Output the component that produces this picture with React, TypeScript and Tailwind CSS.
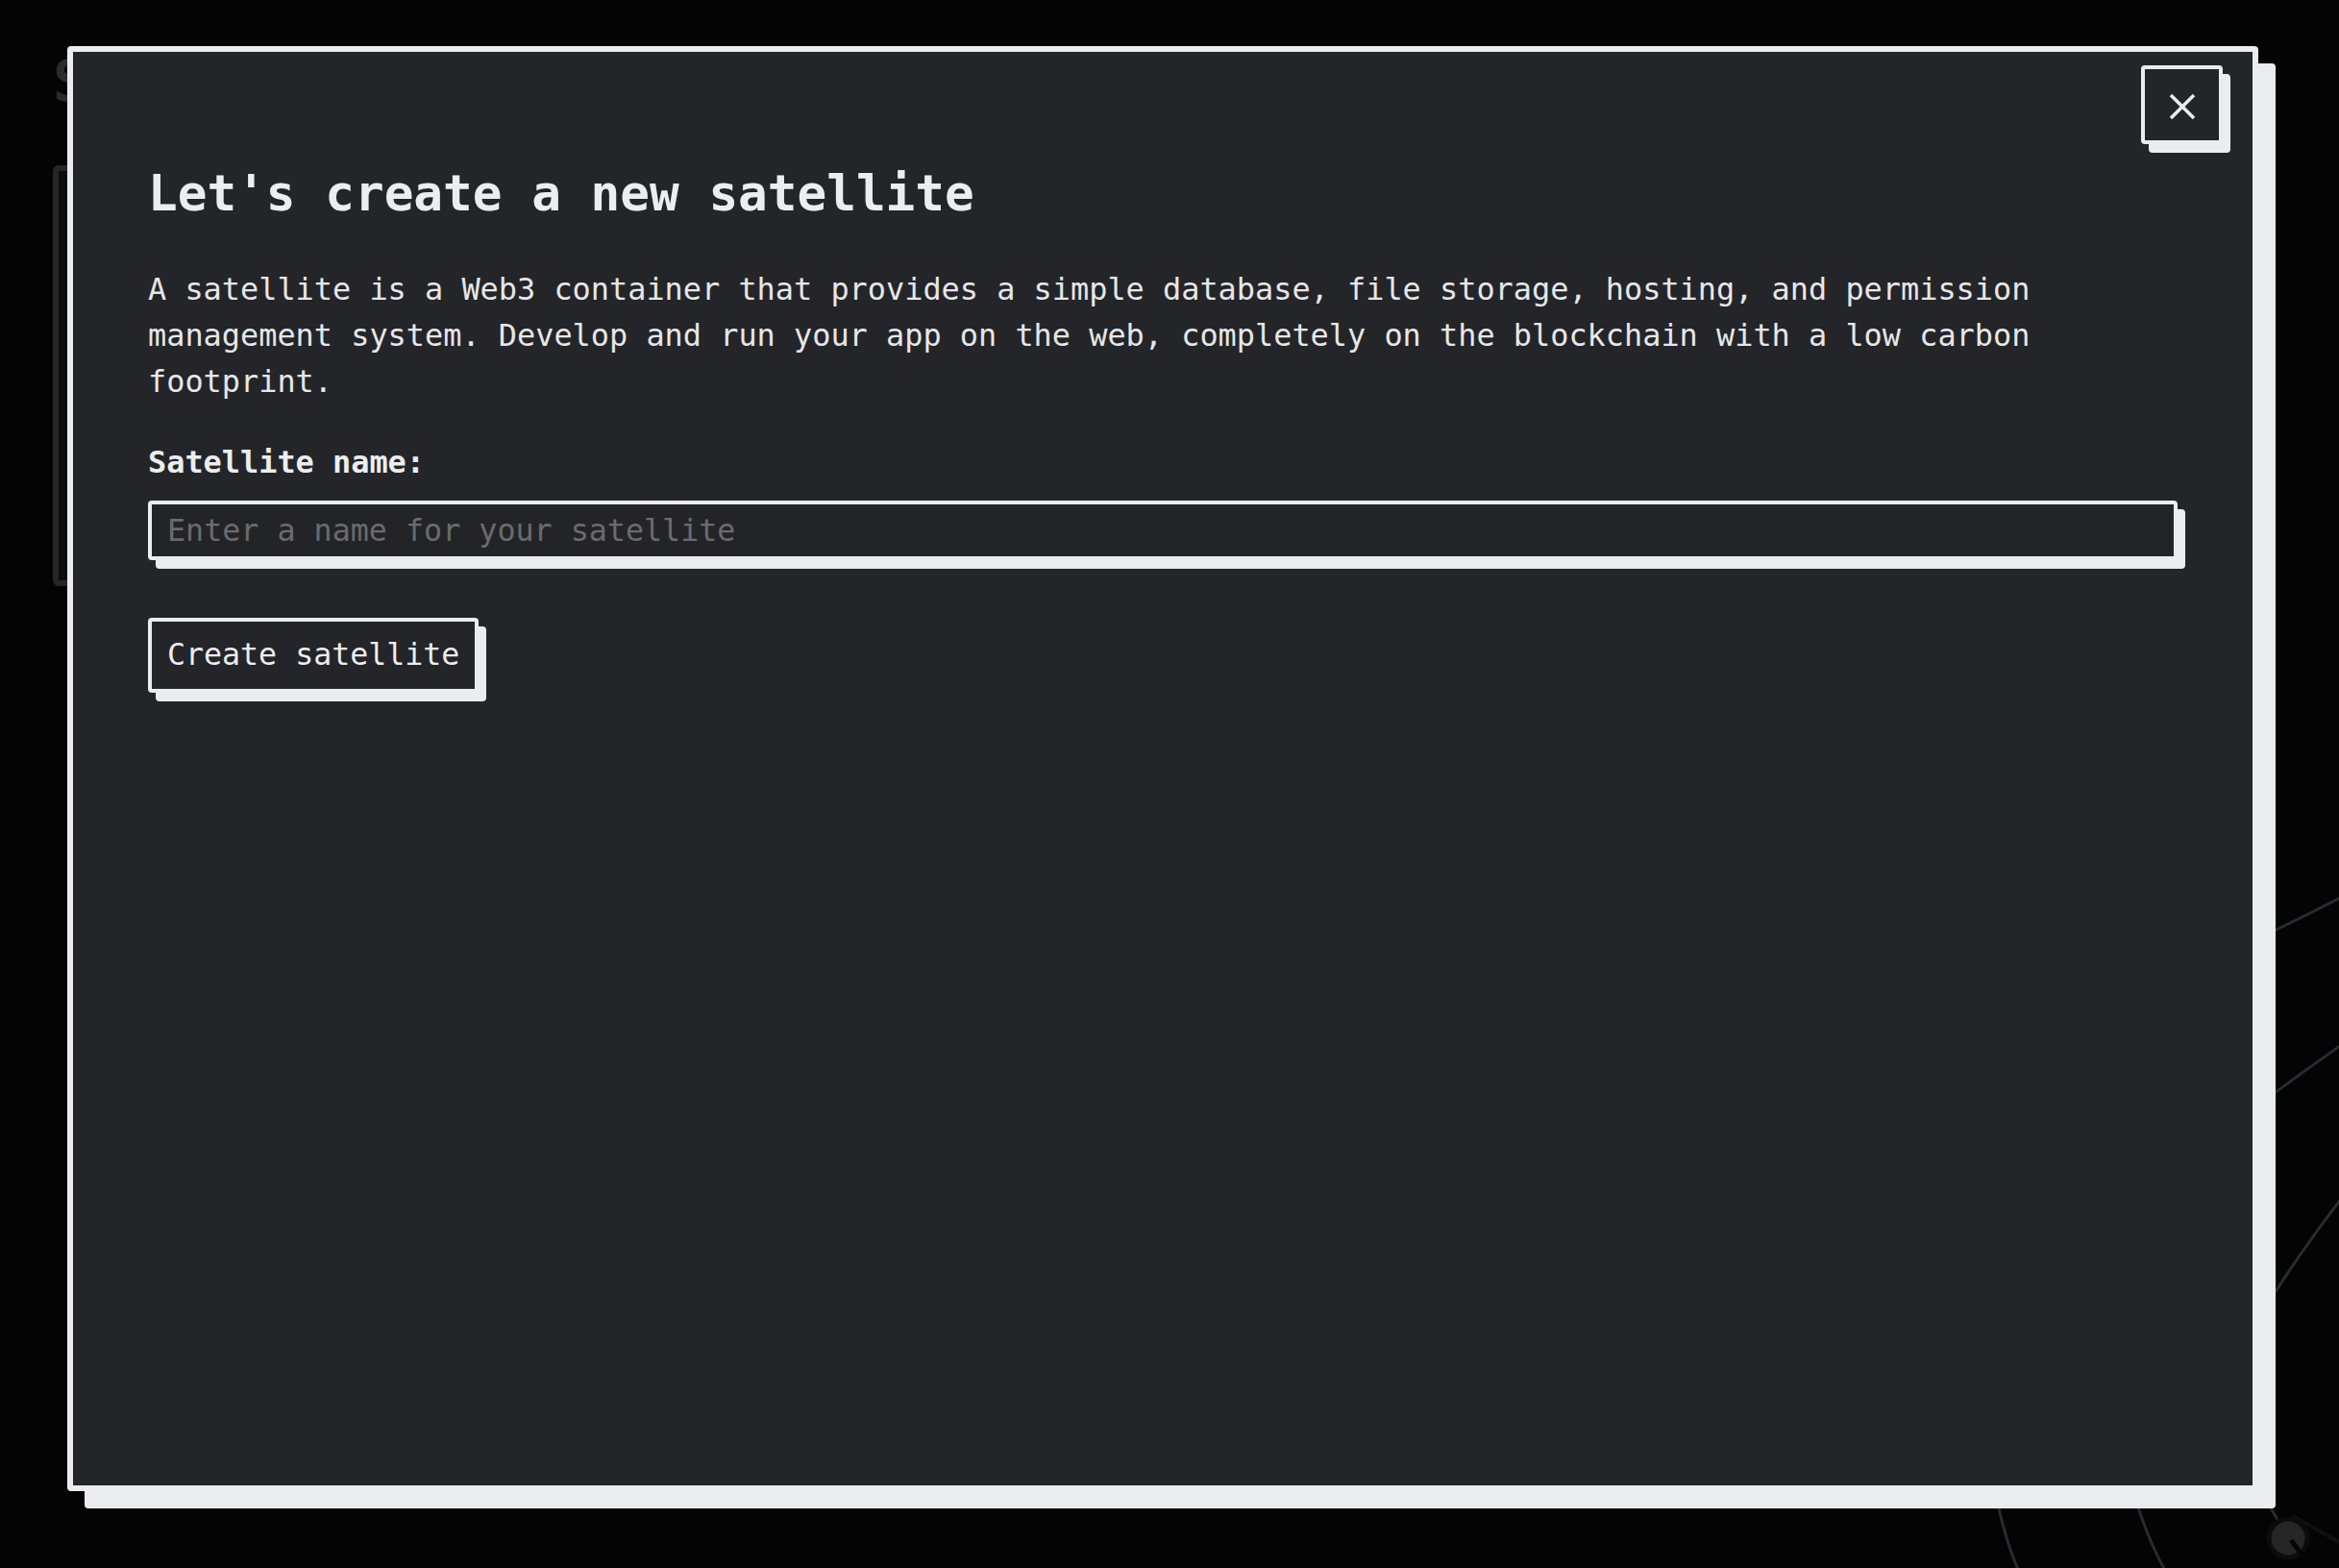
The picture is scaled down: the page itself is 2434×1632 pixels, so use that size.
import { useState } from 'react';

const mono = { fontFamily: '"DejaVu Sans Mono", "Liberation Mono", monospace' };

function Orbits() {
    return (
        <svg className="absolute inset-0" width="2434" height="1632" viewBox="0 0 2434 1632" fill="none">
            {/* orbit lines peeking out beside the modal */}
            <g stroke="#2a2b30" strokeWidth="3">
                <path d="M2290 1005 Q2362 972 2440 932" />
                <path d="M2290 1195 Q2362 1140 2440 1085" />
                <path d="M2310 1440 Q2372 1330 2440 1243" />
                <path d="M2072 1530 Q2084 1600 2103 1640" />
                <path d="M2214 1530 Q2230 1595 2256 1640" />
                <path d="M2345 1540 L2374 1588" />
            </g>
            {/* satellite */}
            <path d="M2386 1578 L2440 1608" stroke="#101012" strokeWidth="4" />
            <circle cx="2381" cy="1601" r="20" fill="#262627" stroke="#0c0c0d" strokeWidth="5" />
            <path d="M2384 1603 L2412 1640" stroke="#050505" strokeWidth="5" />
        </svg>
    );
}

export default function App() {
    const [name, setName] = useState('');

    return (
        <div className="relative h-[1632px] w-[2434px] overflow-hidden bg-[#040404]" style={mono}>
            {/* Page behind the dialog */}
            <div className="absolute inset-0">
                <div className="pl-[55px] pt-[56px]">
                    <h1 className="text-[58px] font-bold leading-none text-[#2b2b2c]">S</h1>
                    <div className="mt-[58px] h-[438px] w-[400px] rounded-[6px] border-[6px] border-[#262627] bg-[#0b0c10]" />
                </div>
                <Orbits />
            </div>

            {/* Dialog */}
            <div className="absolute inset-0 pl-[70px] pt-[48px]">
                <div className="h-[1504px] w-[2280px] rounded-[4px] border-[6px] border-[#ebecef] bg-[#242528] shadow-[18px_18px_0_0_#ebecef]">
                    <div className="flex justify-end pr-[31px] pt-[14px]">
                        <button
                            aria-label="Close"
                            className="flex h-[82px] w-[85px] items-center justify-center rounded-[4px] border-[4px] border-[#ebecef] bg-[#242528] shadow-[8px_9px_0_0_#ebecef]"
                        >
                            <svg width="28" height="28" viewBox="0 0 28 28" stroke="#ebecef" strokeWidth="3.5" className="mt-[3px]">
                                <path d="M2 2 L26 26" />
                                <path d="M26 2 L2 26" />
                            </svg>
                        </button>
                    </div>

                    <div className="pl-[78px] pr-[78px] pt-[26px]">
                        <h2 className="text-[51px] font-bold leading-none text-[#ecedf0]">
                            Let's create a new satellite
                        </h2>
                        <p className="mt-[50px] text-[31.9px] leading-[48px] text-[#e6e7ea]">
                            A satellite is a Web3 container that provides a simple database, file storage, hosting, and permission management system. Develop and run your app on the web, completely on the blockchain with a low carbon footprint.
                        </p>

                        <label htmlFor="sat-name" className="mt-[36px] block text-[31.9px] font-bold leading-[48px] text-[#ecedf0]">
                            Satellite name:
                        </label>
                        <input
                            id="sat-name"
                            value={name}
                            onChange={(e) => setName(e.target.value)}
                            placeholder="Enter a name for your satellite"
                            className="mt-[16px] block h-[62px] w-full rounded-[4px] border-[4px] border-[#ebecef] bg-[#232427] px-[16px] text-[31.7px] text-[#ecedf0] shadow-[8px_9px_0_0_#ebecef] outline-none placeholder:text-[#6b6b6e]"
                        />

                        <button className="mt-[60px] flex h-[78px] items-center rounded-[4px] border-[4px] border-[#ebecef] bg-[#242528] px-[16px] text-[31.6px] text-[#ecedf0] shadow-[8px_9px_0_0_#ebecef]">
                            Create satellite
                        </button>
                    </div>
                </div>
            </div>
        </div>
    );
}
